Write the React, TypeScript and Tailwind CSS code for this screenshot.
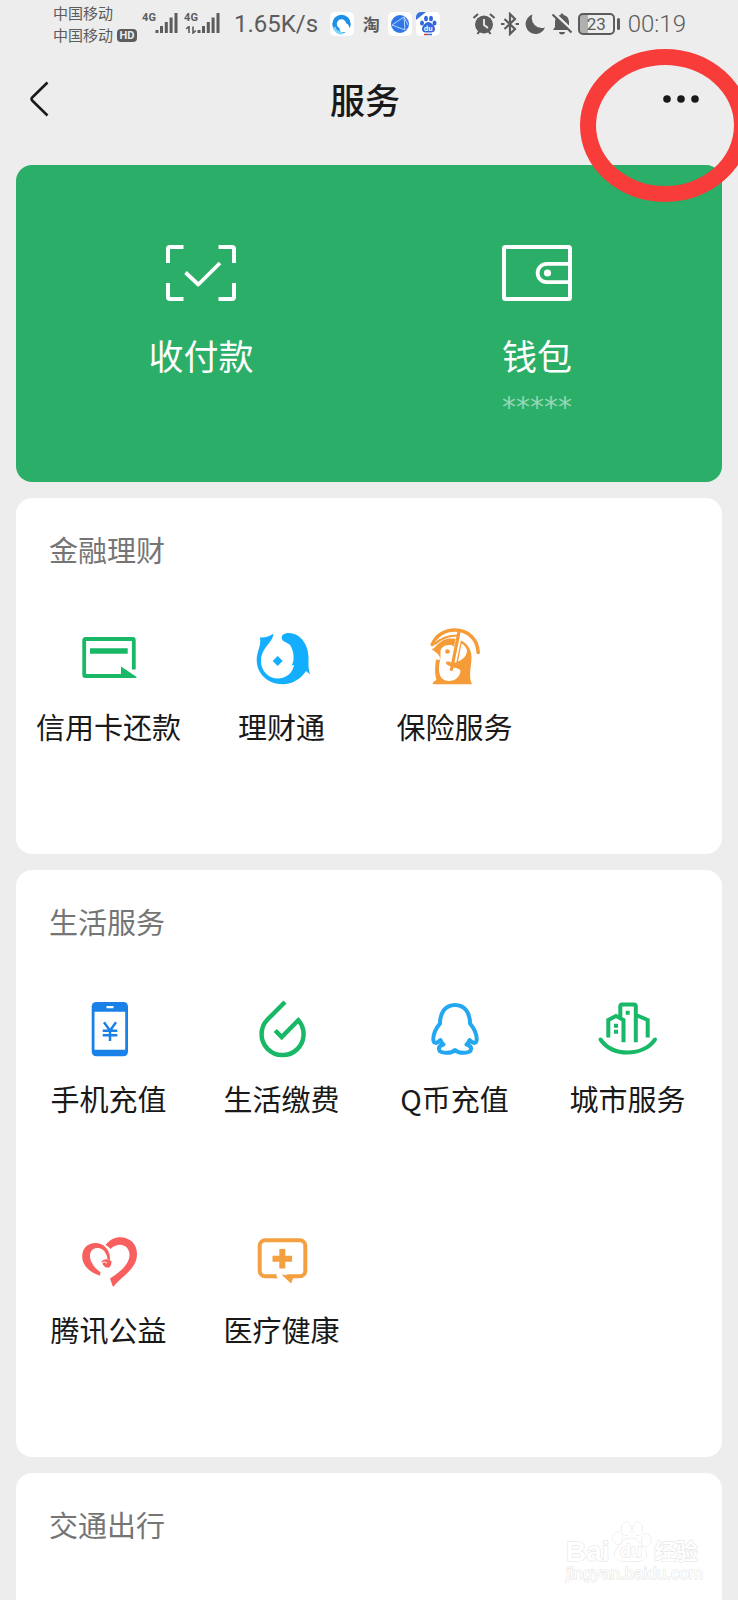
import type { ReactNode } from "react";

interface Service {
  label: string;
  icon: ReactNode;
}

interface Section {
  title: string;
  items: Service[];
}

const ICON_BOX = "size-[66px]";

function CreditCardIcon() {
  return (
    <svg viewBox="0 0 66 66" className={ICON_BOX} aria-hidden="true">
      <path
        d="M57.8 45.5V16a1 1 0 0 0-1-1H9.200a1 1 0 0 0-1 1v35a1 1 0 0 0 1 1H46"
        fill="none"
        stroke="#18b866"
        strokeWidth="3.8"
      />
      <path d="M14 24.300h37.700v5.400H14zM45 42.500l15 10a.7.7 0 0 1-.4 1.400H45z" fill="#18b866" />
    </svg>
  );
}

function FishIcon() {
  return (
    <svg viewBox="0 0 66 66" className={ICON_BOX} aria-hidden="true">
      <path
        d="M11 13.300Q18 14 24.500 9.800C23.500 20 12 23 12 37.500A16.800 17.200 0 0 0 28.700 54.500C37 54.500 44 49 45 40.800L42.500 41.500C46 37 45 26.500 41 21C38 18 32.700 18 32.700 13.500C32.700 10.500 36 9 40 9C52 9.500 59.300 21 59.500 33C59.600 40 59 43 61 50.500L57 47C52 55 43 60.200 34 60.200C19 60.200 7.700 50 7.700 36C7.700 27 12.500 23 11 13.300Z"
        fill="#13aefd"
      />
      <path d="m28.700 32 5 5-5 5-5-5z" fill="#13aefd" />
    </svg>
  );
}

function InsuranceIcon() {
  return (
    <svg viewBox="0 0 66 66" className={ICON_BOX} aria-hidden="true">
      <path
        d="M9.500 25.300C14 25 16 15.500 28 14.500C41 13.500 49.500 22 49.500 33C49.500 43 46 52 50 60.300H10.700C11 57 13 57.500 14.500 55.500C12.500 50 13 42 14 35.500L17.500 36C19 33 17 30 9.500 25.300Z"
        fill="#f59c38"
      />
      <path d="M18.500 29C18 24 22 21 27 21C31 21 33 23 33 26L31 38L25 37.500C23 38.500 24 41 28 42C33 44 38 44 38.500 47C38 53 33 57 27 57C20 57 17 52 17 45C17 38 19 35 18.500 29Z" fill="#fff" />
      <circle cx="25.500" cy="27.500" r="2.300" fill="#f59c38" />
      <path d="M39.500 19.500L36 37.500C42 35 45 31 45 26Q43 21 39.500 19.500Z" fill="#fff" />
      <path d="M37 12L30 46" fill="none" stroke="#fff" strokeWidth="5.500" />
      <path d="M10.300 20.500C14 11 23 6 33 6C46 6 55.500 15 56.200 28.500" fill="none" stroke="#f59c38" strokeWidth="3.600" strokeLinecap="round" />
      <path d="M12.500 20.500C18.500 14 25 11.500 36 11.500" fill="none" stroke="#f59c38" strokeWidth="2" />
      <path d="M37.200 7L29.500 45.500" fill="none" stroke="#f59c38" strokeWidth="3.200" strokeLinecap="round" />
      <path d="M24 38.500Q32 41 41 36L39 44Q29 45 24 38.500Z" fill="#f59c38" />
    </svg>
  );
}

function PhoneIcon() {
  return (
    <svg viewBox="0 0 66 66" className={ICON_BOX} aria-hidden="true">
      <rect x="15.700" y="6" width="36.300" height="54.300" rx="4.500" fill="#1a81e8" />
      <path d="M18.500 15.700h30.700v38H18.500zM30.500 10h7v2.200h-7z" fill="#fff" />
      <path d="m28 26.300 6 8.400 6-8.400M26.700 34.700h14.600M26.700 39.300h14.600M34 34.700V45" fill="none" stroke="#1a81e8" strokeWidth="2.500" />
    </svg>
  );
}

function DropIcon() {
  return (
    <svg viewBox="0 0 66 66" className={ICON_BOX} aria-hidden="true">
      <path d="M36 6 18.500 23.500A21 21 0 1 0 49.300 24.200L32.700 41l-6.500-6.500" fill="none" stroke="#18b866" strokeWidth="4.500" />
    </svg>
  );
}

function PenguinIcon() {
  return (
    <svg viewBox="0 0 66 66" className={ICON_BOX} aria-hidden="true">
      <path
        d="M33 9C23 9 18 17 18 27.500C13.500 33 11.300 38 11.300 43C11.300 48 14.500 48 18.500 44C19 46.500 20 47.500 21.500 48.500C15.500 50 14.500 56.500 24 56.800C28 57 31 56 33 54C35 56 38 57 42 56.800C51.500 56.500 50.500 50 44.500 48.500C46 47.500 47 46.500 47.500 44C51.500 48 54.700 48 54.700 43C54.700 38 52.500 33 48 27.500C48 17 43 9 33 9Z"
        fill="none"
        stroke="#22a7f0"
        strokeWidth="4"
        strokeLinejoin="round"
      />
    </svg>
  );
}

function CityIcon() {
  return (
    <svg viewBox="0 0 66 66" className={ICON_BOX} aria-hidden="true">
      <g fill="none" stroke="#18b866" strokeWidth="4">
        <path d="M13.300 41.500V24L21 20l7.500 4v22.300" />
        <path d="M25.300 21V10.500a2 2 0 0 1 2-2h11.500a2 2 0 0 1 2 2v35.800M41 19l11.700 5v17.500" />
        <path d="M5.500 43.500C11 51.500 21 56.500 32.700 56.500S54.500 51.500 60 43.500" strokeLinecap="round" />
      </g>
      <path d="M19 27.700h4v4h-4zM19 33.700h4v4h-4zM30.700 14.700h4v4h-4z" fill="#18b866" />
    </svg>
  );
}

function HeartIcon() {
  return (
    <svg viewBox="0 0 66 66" className={ICON_BOX} aria-hidden="true">
      <g fill="#f85f5f">
        <path d="M24 48.800C13 45 6.200 38 6.200 29.500C6.200 21 12 16 19.500 16C28 16 34.500 23 34 33L31.500 32.500C31 26 27 20.500 21 21C14 21.500 12 29 16 36C18 40 21.500 43.500 24.500 45Z" />
        <path d="M25.500 34.500Q28 31.500 32 32.500L35.500 34Q35.500 39 33 40.500Q27.500 41.500 25.500 34.500Z" />
        <path d="M29.500 18C34 12.500 39 10.300 44 10.300C54 10.300 61 17 61 27C61 42 46 49 37 60L34 51.500C44 45 54 37 53.500 27C53 18 43 14 34.500 22Q32 19 29.500 18Z" />
      </g>
      <path d="M25.500 36.500Q28 33.500 31 36" fill="none" stroke="#fff" />
    </svg>
  );
}

function MedicalIcon() {
  return (
    <svg viewBox="0 0 66 66" className={ICON_BOX} aria-hidden="true">
      <path d="M27.500 49.300H16.200a5.500 5.500 0 0 1-5.500-5.500v-25a5.500 5.500 0 0 1 5.500-5.500h34.600a5.500 5.500 0 0 1 5.500 5.500v25a5.500 5.500 0 0 1-5.500 5.500H38" fill="none" stroke="#f3a040" strokeWidth="4" />
      <path d="m32.500 47.500 9.500 9 3-7.500zM25 47l4 4.300h-4z" fill="#f3a040" />
      <path d="M33.300 22v19.500M23.500 31.700h19.600" stroke="#f3a040" strokeWidth="6" />
    </svg>
  );
}

const SECTIONS: Section[] = [
  {
    title: "金融理财",
    items: [
      { label: "信用卡还款", icon: <CreditCardIcon /> },
      { label: "理财通", icon: <FishIcon /> },
      { label: "保险服务", icon: <InsuranceIcon /> },
    ],
  },
  {
    title: "生活服务",
    items: [
      { label: "手机充值", icon: <PhoneIcon /> },
      { label: "生活缴费", icon: <DropIcon /> },
      { label: "Q币充值", icon: <PenguinIcon /> },
      { label: "城市服务", icon: <CityIcon /> },
      { label: "腾讯公益", icon: <HeartIcon /> },
      { label: "医疗健康", icon: <MedicalIcon /> },
    ],
  },
];

function Signal({ data }: { data?: boolean }) {
  return (
    <div className="flex h-6 items-start">
      <div className="flex h-[22px] w-3 flex-col items-center justify-between font-['Roboto',sans-serif] text-[11px] leading-3 font-bold">
        4G
        {data && (
          <svg viewBox="0 0 10 8" className="h-2 w-[10px]" aria-hidden="true">
            <path d="M0 3 3 .5V7M7 .5V7l3-2.500" fill="none" stroke="currentColor" strokeWidth="1.600" />
          </svg>
        )}
      </div>
      <svg viewBox="0 0 23 22" className="h-[22px] w-[23px]" aria-hidden="true">
        <path d="M2 18v3M6.500 14v7M11.300 10v11M16.100 5.500V21M21 1v20" stroke="currentColor" strokeWidth="3" />
      </svg>
    </div>
  );
}

function AppBadges() {
  return (
    <div className="flex items-center gap-2">
      <svg viewBox="0 0 24 24" className="size-6" aria-hidden="true">
        <rect width="24" height="24" rx="5" fill="#fff" />
        <circle cx="11.500" cy="12" r="7" fill="none" stroke="#1c8fe6" strokeWidth="4.500" />
        <path d="M4 15a8 8 0 0 0 9 6" fill="none" stroke="#7fd4f5" strokeWidth="3" />
        <path d="M11 20a4.500 4.500 0 0 1 1-7.500 4 4 0 0 1 7 2l3 6z" fill="#fff" />
      </svg>
      <span className="w-[18px] text-center text-[17px] leading-6 font-bold">淘</span>
      <svg viewBox="0 0 24 24" className="size-6" aria-hidden="true">
        <rect width="24" height="24" rx="5" fill="#fff" />
        <circle cx="12" cy="12" r="9" fill="#2f77e6" />
        <path d="m4 13 12-8 1 13zM16 5l4 8" fill="none" stroke="#bcd6ff" />
      </svg>
      <svg viewBox="0 0 24 24" className="-ml-1 size-6" aria-hidden="true">
        <rect width="24" height="24" rx="5" fill="#fff" />
        <path d="M0 5a5 5 0 0 1 5-5h5L0 8z" fill="#3a6fe0" />
        <g fill="#2f66dc">
          <ellipse cx="6" cy="11" rx="2" ry="2.500" />
          <ellipse cx="10" cy="6.500" rx="2" ry="2.700" />
          <ellipse cx="15" cy="6.500" rx="2" ry="2.700" />
          <ellipse cx="18.500" cy="11" rx="2" ry="2.500" />
          <path d="M12.300 10c3 0 6.700 4 6.700 7s-2.500 3.500-6.700 3.500S6 20 6 17s3.500-7 6.300-7z" />
        </g>
        <path d="M8 22.500h4" stroke="#d33" strokeWidth="1.500" />
        <path d="M12 22.500h4" stroke="#3a6fe0" strokeWidth="1.500" />
        <text x="12.300" y="18.500" textAnchor="middle" fontSize="7" fontWeight="700" fill="#fff">du</text>
      </svg>
    </div>
  );
}

function SystemIcons() {
  return (
    <div className="flex items-center">
      <svg viewBox="0 0 24 24" className="size-6" aria-hidden="true">
        <circle cx="12" cy="12.500" r="9" fill="currentColor" />
        <path d="M1.500 6 6 2M22.500 6 18 2M5.500 22l2-3M18.500 22l-2-3" stroke="currentColor" strokeWidth="2.200" />
        <path d="M12 7v6l4 3" fill="none" stroke="#ededed" strokeWidth="1.800" />
      </svg>
      <svg viewBox="0 0 20 24" className="ml-1 h-6 w-5" aria-hidden="true">
        <path d="m4.500 7 10.500 10-5 5V2l5 5L4.500 17M1 12h3.500M15.500 12H19" fill="none" stroke="currentColor" strokeWidth="2.200" />
      </svg>
      <svg viewBox="0 0 22 22" className="ml-1 size-[22px]" aria-hidden="true">
        <path d="M8.500 1.500A10 10 0 1 0 21 14.500 10 10 0 0 1 8.500 1.500z" fill="currentColor" />
      </svg>
      <svg viewBox="0 0 24 24" className="ml-1 size-6" aria-hidden="true">
        <path d="M12 1.500c1 0 1.500.6 1.500 1.600 4 .9 5.500 3.900 5.500 7.400v4.500l2 3H3l2-3v-4.500c0-3.500 1.500-6.500 5.500-7.400 0-1 .5-1.600 1.500-1.600zM9 20h6c0 1.700-1.300 2.500-3 2.500S9 21.700 9 20z" fill="currentColor" />
        <path d="m4 1 19 18" stroke="#ededed" strokeWidth="2.500" />
        <path d="m2.500 2.500 19 18" stroke="currentColor" strokeWidth="2.200" />
      </svg>
      <div className="ml-1 flex items-center gap-[2px]">
        <div className="flex h-[22px] w-[37px] items-center justify-center rounded-[5px] border-2 border-[#5c5c5c] bg-linear-to-r from-[#b0b0b0] from-25% to-transparent to-25% font-['Roboto',sans-serif] text-[17px] leading-none">
          23
        </div>
        <div className="h-3 w-[3px] rounded-full bg-[#5c5c5c]" />
      </div>
    </div>
  );
}

function StatusBar() {
  return (
    <div className="flex h-12 items-center justify-between pr-[52px] pl-[53px] text-[#5c5c5c]">
      <div className="flex items-center">
        <div className="text-[15px] leading-[22px]">
          <div>中国移动</div>
          <div className="flex items-center gap-1">
            中国移动
            <span className="flex h-[13px] w-5 items-center justify-center rounded-[4px] bg-[#5c5c5c] font-['Roboto',sans-serif] text-[11px] leading-none font-bold text-[#ededed]">
              HD
            </span>
          </div>
        </div>
        <div className="ml-[6px] flex gap-[7px]">
          <Signal />
          <Signal data />
        </div>
        <span className="mr-3 ml-[14px] font-['Roboto',sans-serif] text-2xl">1.65K/s</span>
        <AppBadges />
      </div>
      <div className="flex items-center gap-2">
        <SystemIcons />
        <span className="font-['Roboto',sans-serif] text-2xl font-light">00:19</span>
      </div>
    </div>
  );
}

function NavBar() {
  return (
    <header className="relative flex h-[101px] items-center text-[#191919]">
      <button type="button" aria-label="返回" className="flex h-full w-20 items-center pl-7">
        <svg viewBox="0 0 22 36" className="h-9 w-[22px]" aria-hidden="true">
          <path d="M19.500 1.500 4.200 16.500a2 2 0 0 0 0 3L19.500 34.500" fill="none" stroke="currentColor" strokeWidth="2.600" />
        </svg>
      </button>
      <h1 className="flex-1 text-center text-[35px] leading-[50px] font-medium">服务</h1>
      <button type="button" aria-label="更多" className="flex h-full w-22 items-center justify-end pr-[38px]">
        <svg viewBox="0 0 38 10" className="h-[10px] w-[38px]" fill="currentColor" aria-hidden="true">
          <circle cx="5" cy="5" r="3.800" />
          <circle cx="19" cy="5" r="3.800" />
          <circle cx="33" cy="5" r="3.800" />
        </svg>
      </button>
      {/* hand-drawn style highlight around the menu button */}
      <div className="pointer-events-none absolute top-px -right-3 z-10 h-[153px] w-[170px] rounded-[50%] border-16 border-[#f73c3a]" />
    </header>
  );
}

function PayCard() {
  return (
    <section className="mt-4 grid h-[317px] grid-cols-2 rounded-2xl bg-[#2bae67] px-[17px] pt-[79px] text-white">
      <button type="button" className="flex flex-col items-center">
        <svg viewBox="0 0 72 58" className="h-[58px] w-[72px]" aria-hidden="true">
          <path d="M3 19V5a2 2 0 0 1 2-2h13.500M53.500 3H67a2 2 0 0 1 2 2v14M69 39v14a2 2 0 0 1-2 2H53.500M18.500 55H5a2 2 0 0 1-2-2V39" fill="none" stroke="currentColor" strokeWidth="4" />
          <path d="M20.500 28.500 33.300 40.500 55 19" fill="none" stroke="currentColor" strokeWidth="3.800" strokeLinejoin="round" />
        </svg>
        <span className="mt-7 text-[35px] leading-[50px]">收付款</span>
      </button>
      <button type="button" className="flex flex-col items-center">
        <svg viewBox="0 0 72 58" className="h-[58px] w-[72px]" aria-hidden="true">
          <rect x="3" y="3" width="66" height="52" rx="1.500" fill="none" stroke="currentColor" strokeWidth="4" />
          <path d="M69 19.800H45.800a9.200 9.200 0 0 0 0 18.400H69" fill="none" stroke="currentColor" strokeWidth="3.800" />
          <circle cx="46.500" cy="29" r="3.600" fill="currentColor" />
        </svg>
        <span className="mt-7 text-[35px] leading-[50px]">钱包</span>
        <span className="mt-2 font-['DejaVu_Sans',sans-serif] text-[28px] leading-[40px] text-white/50">*****</span>
      </button>
    </section>
  );
}

function ServiceSection({ title, items }: Section) {
  return (
    <section className="rounded-2xl bg-white pr-2 pl-1.5">
      <h2 className="h-[125px] px-[27px] pt-[31px] text-[29px] leading-[40px] text-[#757575]">{title}</h2>
      <div className="grid grid-cols-4">
        {items.map((item) => (
          <button key={item.label} type="button" className="flex h-[231px] flex-col items-center gap-4 pt-px">
            {item.icon}
            <span className="text-[29px] leading-[40px] whitespace-nowrap text-[#191919]">{item.label}</span>
          </button>
        ))}
      </div>
    </section>
  );
}

function Watermark() {
  return (
    <div className="pointer-events-none absolute right-10 bottom-4 w-[132px] font-['Liberation_Sans','Noto_Sans_CJK_SC',sans-serif] text-white [-webkit-text-stroke:1px_#e2e2e2] [paint-order:stroke_fill]">
      <div className="flex h-11 items-end justify-between">
        <span className="text-[28px] leading-6 font-bold">Bai</span>
        <svg viewBox="0 0 42 46" className="h-11 w-10" fill="#fff" stroke="#e2e2e2" aria-hidden="true">
          <ellipse cx="6" cy="19" rx="5" ry="6.500" />
          <ellipse cx="15" cy="9" rx="5" ry="7" />
          <ellipse cx="27" cy="9" rx="5" ry="7" />
          <ellipse cx="36" cy="21" rx="5" ry="6.500" />
          <path d="M20 19c8 0 9 6 14 11 5 7 1 13-6 13H11c-7 0-11-7-6-13 5-5 7-11 15-11z" />
          <text x="20" y="39" textAnchor="middle" fontSize="19" fontWeight="700">du</text>
        </svg>
        <span className="text-[22px] leading-6 font-bold">经验</span>
      </div>
      <div className="text-right text-[17px] leading-5">jingyan.baidu.com</div>
    </div>
  );
}

export default function App() {
  return (
    <div className="relative flex min-h-screen flex-col overflow-hidden bg-[#ededed] font-['Noto_Sans_CJK_SC',sans-serif]">
      <StatusBar />
      <NavBar />
      <main className="flex flex-1 flex-col gap-4 px-4">
        <PayCard />
        {SECTIONS.map((section) => (
          <ServiceSection key={section.title} {...section} />
        ))}
        <section className="flex-1 rounded-t-2xl bg-white px-[33px] pt-[31px]">
          <h2 className="text-[29px] leading-[40px] text-[#757575]">交通出行</h2>
        </section>
      </main>
      <Watermark />
    </div>
  );
}
